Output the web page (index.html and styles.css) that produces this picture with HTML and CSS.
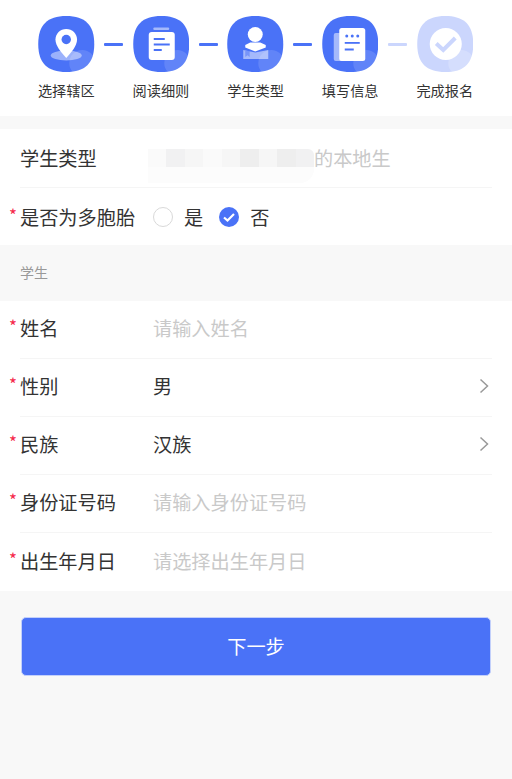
FILE: index.html
```html
<!DOCTYPE html>
<html lang="zh-CN">
<head>
<meta charset="utf-8">
<title>填写信息</title>
<link rel="stylesheet" href="styles.css">
</head>
<body>
<div class="steps">
  <div class="step">
    <svg class="ico" viewBox="0 0 56 56"><defs><clipPath id="sq"><path d="M28 0C47 0 56 9 56 28S47 56 28 56 0 47 0 28 9 0 28 0Z"/></clipPath></defs><path class="bg" d="M28 0C47 0 56 9 56 28S47 56 28 56 0 47 0 28 9 0 28 0Z"/><circle class="hi" cx="44" cy="47" r="13" clip-path="url(#sq)"/><ellipse cx="28" cy="39.500" rx="15.500" ry="5" fill="#fff" opacity=".45"/><path d="M28 13c-6.100 0-10.800 4.700-10.800 10.600 0 6.200 5.600 12.800 10.800 18.400 5.200-5.600 10.800-12.200 10.800-18.400C38.800 17.700 34.100 13 28 13Z" fill="#fff"/><circle cx="28" cy="23.500" r="4.700" fill="#4a72f7"/></svg>
    <span class="lbl">选择辖区</span>
  </div>
  <i class="line"></i>
  <div class="step">
    <svg class="ico" viewBox="0 0 56 56"><path class="bg" d="M28 0C47 0 56 9 56 28S47 56 28 56 0 47 0 28 9 0 28 0Z"/><circle class="hi" cx="44" cy="47" r="13" clip-path="url(#sq)"/><rect x="20" y="11.500" width="16" height="2.500" rx="1.200" fill="#fff" opacity=".5"/><rect x="15.500" y="16" width="26" height="28" rx="3" fill="#fff"/><path d="M20.500 23h11M20.500 28.500h16M20.500 34h8" stroke="#4a72f7" stroke-width="2" fill="none"/></svg>
    <span class="lbl">阅读细则</span>
  </div>
  <i class="line"></i>
  <div class="step">
    <svg class="ico" viewBox="0 0 56 56"><path class="bg" d="M28 0C47 0 56 9 56 28S47 56 28 56 0 47 0 28 9 0 28 0Z"/><circle class="hi" cx="44" cy="47" r="13" clip-path="url(#sq)"/><circle cx="28" cy="18.500" r="7.500" fill="#fff"/><path d="M23 26.500h10l5.500 2.500v2.500L28 35.500 18 31.500V29Z" fill="#fff"/><path d="M16 34l12 2.500L41 34v9H16Z" fill="#fff" opacity=".5"/><path d="M18 35v6l2.200-1.700L22.400 41v-6Z" fill="#4a72f7" opacity=".5"/></svg>
    <span class="lbl">学生类型</span>
  </div>
  <i class="line"></i>
  <div class="step">
    <svg class="ico" viewBox="0 0 56 56"><path class="bg" d="M28 0C47 0 56 9 56 28S47 56 28 56 0 47 0 28 9 0 28 0Z"/><circle class="hi" cx="44" cy="47" r="13" clip-path="url(#sq)"/><rect x="11.500" y="17" width="14" height="28" rx="2" fill="#fff" opacity=".5"/><rect x="17" y="12" width="26" height="33" rx="2.500" fill="#fff"/><g fill="#4a72f7"><circle cx="24.500" cy="20" r="1.500"/><circle cx="30" cy="20" r="1.500"/><circle cx="35.500" cy="20" r="1.500"/><rect x="22.500" y="26" width="15" height="1.800"/><rect x="22.500" y="32.500" width="9" height="2"/></g></svg>
    <span class="lbl">填写信息</span>
  </div>
  <i class="line off"></i>
  <div class="step">
    <svg class="ico" viewBox="0 0 56 56"><path d="M28 0C47 0 56 9 56 28S47 56 28 56 0 47 0 28 9 0 28 0Z" fill="#cbd6fd"/><circle class="hi soft" cx="44" cy="47" r="13" clip-path="url(#sq)"/><circle cx="28.500" cy="28" r="16" fill="#fff"/><path d="M19 27.500l7 6.500 12-12" stroke="#cbd6fd" stroke-width="4" fill="none"/></svg>
    <span class="lbl">完成报名</span>
  </div>
</div>

<section class="group first">
  <div class="row tall">
    <span class="label">学生类型</span>
    <div class="value notice">
      <div class="blur">
        <div class="cells">
          <b class="b1"></b><b class="b2"></b><b class="b3"></b><b class="b1"></b><b class="b3"></b><b class="b4"></b><b class="b3"></b><b class="b4"></b><b class="b2"></b>
        </div>
      </div>
      <span>的本地生</span>
    </div>
  </div>
  <div class="row end short">
    <span class="label req">是否为多胞胎</span>
    <div class="value radios">
      <span class="radio"></span><span class="opt">是</span>
      <svg class="checked" viewBox="0 0 20 20"><circle cx="10" cy="10" r="10" fill="#4a72f7"/><path d="M5 10.500l3.500 3L15 7" stroke="#fff" stroke-width="2.200" fill="none"/></svg><span class="opt">否</span>
    </div>
  </div>
</section>

<div class="title">学生</div>

<section class="group lifted">
  <div class="row"><span class="label req">姓名</span><span class="value ph">请输入姓名</span></div>
  <div class="row"><span class="label req">性别</span><span class="value">男</span><svg class="arrow" viewBox="0 0 10 16"><path d="M1.500 1.500L8.500 8l-7 6.500"/></svg></div>
  <div class="row"><span class="label req">民族</span><span class="value">汉族</span><svg class="arrow" viewBox="0 0 10 16"><path d="M1.500 1.500L8.500 8l-7 6.500"/></svg></div>
  <div class="row"><span class="label req">身份证号码</span><span class="value ph">请输入身份证号码</span></div>
  <div class="row end"><span class="label req">出生年月日</span><span class="value ph">请选择出生年月日</span></div>
</section>

<div class="actions"><button class="next" type="button">下一步</button></div>
</body>
</html>
```

FILE: styles.css
```css
* { box-sizing: border-box; }
html, body { margin: 0; padding: 0; }
body {
  width: 512px;
  height: 779px;
  background: #f8f8f8;
  font-family: "Noto Sans CJK SC", "Noto Sans", sans-serif;
  color: #333;
  overflow: hidden;
}
.steps {
  height: 116px;
  background: #fff;
  padding: 16px 39px 0 38px;
  display: flex;
  align-items: flex-start;
  justify-content: space-between;
}
.step {
  width: 56.500px;
  display: flex;
  flex-direction: column;
  align-items: center;
}
.ico { width: 56.500px; height: 56px; display: block; }
.bg { fill: #4a72f7; }
.hi { fill: #fff; opacity: .13; }
.hi.soft { opacity: .2; }
.lbl {
  margin-top: 8px;
  font-size: 14.200px;
  line-height: 20px;
  white-space: nowrap;
}
.line {
  width: 19px;
  height: 3px;
  margin-top: 27px;
  background: #4a72f7;
  border-radius: 1px;
}
.line.off { background: #cbd6fd; }
.group { background: #fff; }
.group.first { margin-top: 13px; }
.row {
  height: 58px;
  margin-left: 20px;
  margin-right: 20px;
  border-bottom: 1px solid #f5f5f5;
  display: flex;
  align-items: center;
  font-size: 19.200px;
}
.row.tall { height: 59px; }
.row.short { height: 57px; }
.lifted .row { padding-bottom: 3px; }
.row.end { border-bottom: 0; }
.label { width: 133px; flex: none; color: #333; white-space: nowrap; }
.req { position: relative; }
.req::before {
  content: "*";
  position: absolute;
  left: -11px;
  top: 0;
  color: #f5284a;
  font-size: 17px;
  line-height: 24px;
}
.value { flex: 1; color: #333; display: flex; align-items: center; }
.ph { color: #c9c9c9; }
.notice { color: #c9c9c9; margin-left: -5px; }
.blur {
  width: 166px;
  height: 18px;
  position: relative;
}
.blur::after {
  content: "";
  position: absolute;
  left: 0;
  right: 0;
  top: 18px;
  height: 16px;
  background: #fcfcfc;
  border-radius: 0 0 14px 0;
}
.cells { display: flex; height: 18px; overflow: hidden; border-radius: 0 6px 0 0; }
.cells b { flex: 1; }
.b1 { background: #fafafa; }
.b2 { background: #f1f1f2; }
.b3 { background: #f6f6f6; }
.b4 { background: #eeeeee; }
.radio {
  width: 20px;
  height: 20px;
  border: 1px solid #d9d9d9;
  border-radius: 50%;
  margin-right: 11px;
}
.opt { margin-right: 16px; }
.checked { width: 20px; height: 20px; margin-right: 11px; }
.title {
  height: 56px;
  padding-left: 20px;
  padding-bottom: 2px;
  display: flex;
  align-items: center;
  font-size: 14px;
  color: #999;
}
.arrow {
  width: 10px;
  height: 16px;
  margin-right: 3px;
  fill: none;
  stroke: #999;
  stroke-width: 1.500;
}
.actions { padding: 26px 21px 0; }
.next {
  width: 470px;
  height: 58.500px;
  display: block;
  padding: 0;
  border: 1px solid #c3d0fb;
  border-radius: 5px;
  background: #4a72f7;
  color: #fff;
  font-family: inherit;
  font-size: 19.200px;
}
```
